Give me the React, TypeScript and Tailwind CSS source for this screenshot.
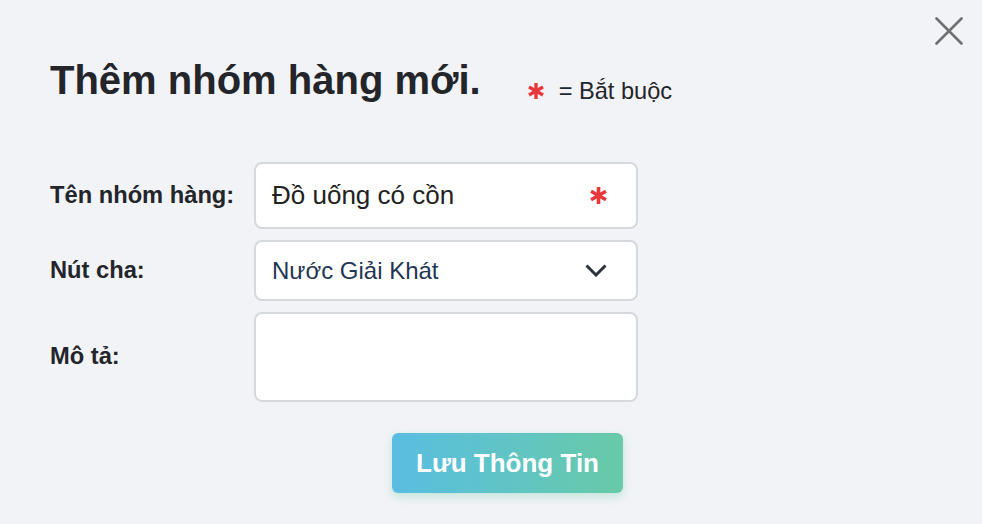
const Asterisk = ({ size }: { size: number }) => (
  <svg width={size} height={size} viewBox="0 0 16 16" className="shrink-0">
    <g stroke="#e8383b" strokeWidth="3.4" strokeLinecap="butt">
      <line x1="8" y1="0" x2="8" y2="16" />
      <line x1="1" y1="4" x2="15" y2="12" />
      <line x1="1" y1="12" x2="15" y2="4" />
    </g>
  </svg>
);

const AddCategory = () => {
  return (
    <div
      className="relative w-[982px] h-[524px] bg-[#f2f3f7] text-[#23252a] overflow-hidden"
      style={{ fontFamily: '"Liberation Sans", Arial, sans-serif' }}
    >
      <button className="absolute right-[19px] top-[17px] w-[28px] h-[28px]" aria-label="Đóng">
        <svg width="28" height="28" viewBox="0 0 28 28">
          <g stroke="#707070" strokeWidth="2.6" strokeLinecap="round">
            <line x1="1.5" y1="1.5" x2="26.5" y2="26.5" />
            <line x1="26.5" y1="1.5" x2="1.5" y2="26.5" />
          </g>
        </svg>
      </button>

      <div className="pl-[50px] pt-[60px]">
        <div className="flex items-start">
          <h1 className="text-[40px] leading-[40px] font-bold text-[#23252a]">
            Thêm nhóm hàng mới.
          </h1>
          <div className="ml-[47px] mt-[19px] flex items-center gap-[15px]">
            <Asterisk size={16} />
            <span className="text-[23.6px] leading-[24px]">= Bắt buộc</span>
          </div>
        </div>

        <div className="mt-[59px] grid grid-cols-[204px_384px] gap-y-[11px] items-center">
          <label className="text-[23.7px] font-bold">Tên nhóm hàng:</label>
          <div className="h-[67px] flex items-center justify-between bg-white border-2 border-[#d5d8dd] rounded-[8px] pl-[16px] pr-[29px]">
            <input
              defaultValue="Đồ uống có cồn"
              className="w-full outline-none bg-transparent text-[26px] text-[#222]"
            />
            <Asterisk size={17} />
          </div>

          <label className="text-[23.7px] font-bold">Nút cha:</label>
          <div className="h-[61px] flex items-center justify-between bg-white border-2 border-[#d5d8dd] rounded-[8px] pl-[16px] pr-[29px]">
            <span className="text-[24px] text-[#1f3654]">Nước Giải Khát</span>
            <svg width="22" height="13" viewBox="0 0 22 13">
              <polyline
                points="1.5,1.5 11,11 20.5,1.5"
                fill="none"
                stroke="#2d3440"
                strokeWidth="3"
              />
            </svg>
          </div>

          <label className="text-[23.7px] font-bold">Mô tả:</label>
          <textarea className="h-[90px] resize-none bg-white border-2 border-[#d5d8dd] rounded-[8px] outline-none" />
        </div>

        <button className="ml-[342px] mt-[31px] w-[231px] h-[60px] rounded-[6px] bg-gradient-to-r from-[#5abde2] to-[#68caa6] text-white text-[26px] font-bold shadow-[0_4px_10px_rgba(104,202,166,0.35)]">
          Lưu Thông Tin
        </button>
      </div>
    </div>
  );
};

export default function App() {
  return <AddCategory />;
}
